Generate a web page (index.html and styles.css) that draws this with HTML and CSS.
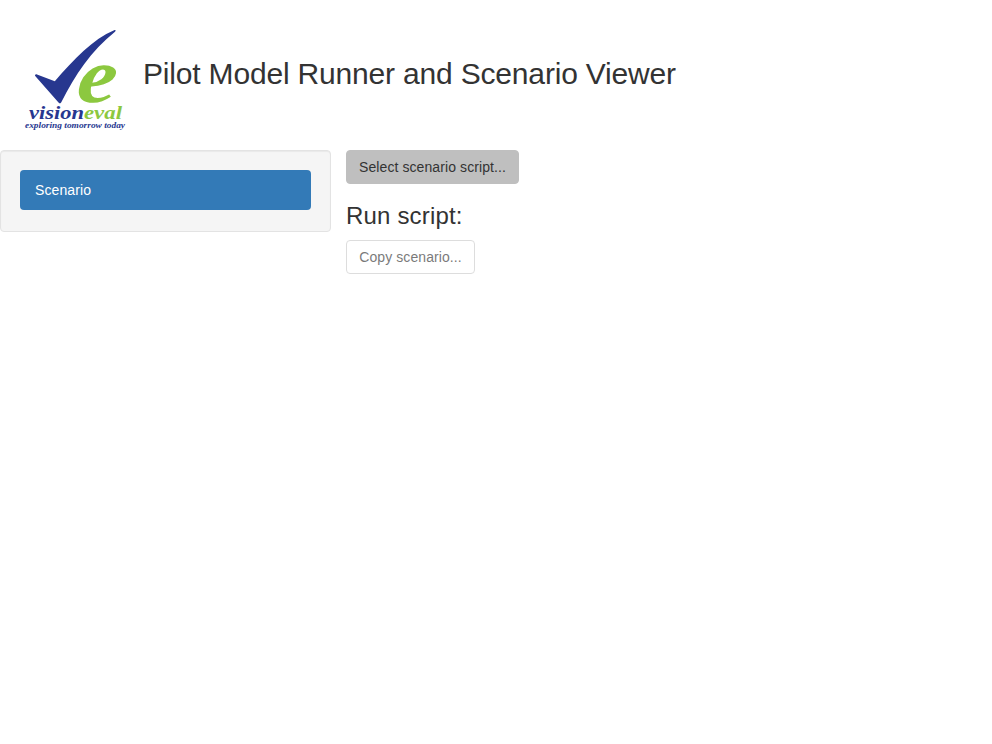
FILE: index.html
```html
<!DOCTYPE html>
<html lang="en">
<head>
<meta charset="utf-8">
<title>Pilot Model Runner and Scenario Viewer</title>
<link rel="stylesheet" href="styles.css">
</head>
<body>
<header class="header">
  <svg class="logo" viewBox="0 0 143 150" role="img" aria-label="visioneval">
    <path class="navy" d="M35.2 76.1C34.5 75 35.6 74 37 74.4L54.8 81.2C74 59 93 39 114.1 30.2C115.8 29.6 116.2 30.7 115 31.7C91 51 75 75 61.3 102.3C60.6 103.7 59.4 103.7 58.5 102.6Z"/>
    <text class="green" transform="translate(75.5 101.5) skewX(-6)" font-size="78" textLength="39.5" lengthAdjust="spacingAndGlyphs">e</text>
    <text class="navy" x="29" y="119" font-size="19" textLength="55" lengthAdjust="spacingAndGlyphs">vision</text>
    <text class="green" x="84" y="119" font-size="19" textLength="38" lengthAdjust="spacingAndGlyphs">eval</text>
    <text class="navy" x="25" y="128" font-size="8" textLength="100" lengthAdjust="spacingAndGlyphs">exploring tomorrow today</text>
  </svg>
  <h2 class="title">Pilot Model Runner and Scenario Viewer</h2>
</header>
<div class="layout">
  <nav class="well"><a class="pill">Scenario</a></nav>
  <main class="content">
    <button class="btn select">Select scenario script...</button>
    <h3 class="subtitle">Run script:</h3>
    <button class="btn copy" disabled>Copy scenario...</button>
  </main>
</div>
</body>
</html>
```
FILE: styles.css
```css
* { box-sizing: border-box; }
body {
  margin: 0;
  background: #fff;
  color: #333;
  font: 14px/20px "Liberation Sans", Arial, sans-serif;
}
.header { display: flex; height: 150px; }
.logo {
  width: 143px;
  height: 150px;
  flex: none;
  font-family: "Liberation Serif", serif;
  font-weight: bold;
  font-style: italic;
}
.navy { fill: #27378f; }
.green { fill: #8cc83f; }
.title { margin: 57px 0 0; font-size: 30px; line-height: 33px; font-weight: 400; letter-spacing: -.18px; }
.layout { display: flex; align-items: flex-start; gap: 15px; }
.well {
  width: 331px;
  height: 82px;
  padding: 19px;
  border: 1px solid #e3e3e3;
  border-radius: 4px;
  background: #f5f5f5;
  box-shadow: inset 0 1px 1px rgba(0, 0, 0, .05);
}
.pill {
  display: block;
  padding: 10px 15px;
  border-radius: 4px;
  background: #337ab7;
  color: #fff;
  letter-spacing: .1px;
}
.content { display: flex; flex-direction: column; align-items: flex-start; }
.btn {
  height: 34px;
  padding: 6px 12px;
  border: 1px solid #ccc;
  border-radius: 4px;
  background: #fff;
  color: #333;
  font: inherit;
  letter-spacing: .09px;
  white-space: nowrap;
}
.select { background: #bfbfbf; border-color: #bfbfbf; }
.copy { width: 129px; opacity: .65; }
.subtitle { margin: 19px 0 11px; font-size: 24px; line-height: 26px; font-weight: 400; letter-spacing: .18px; }
```
